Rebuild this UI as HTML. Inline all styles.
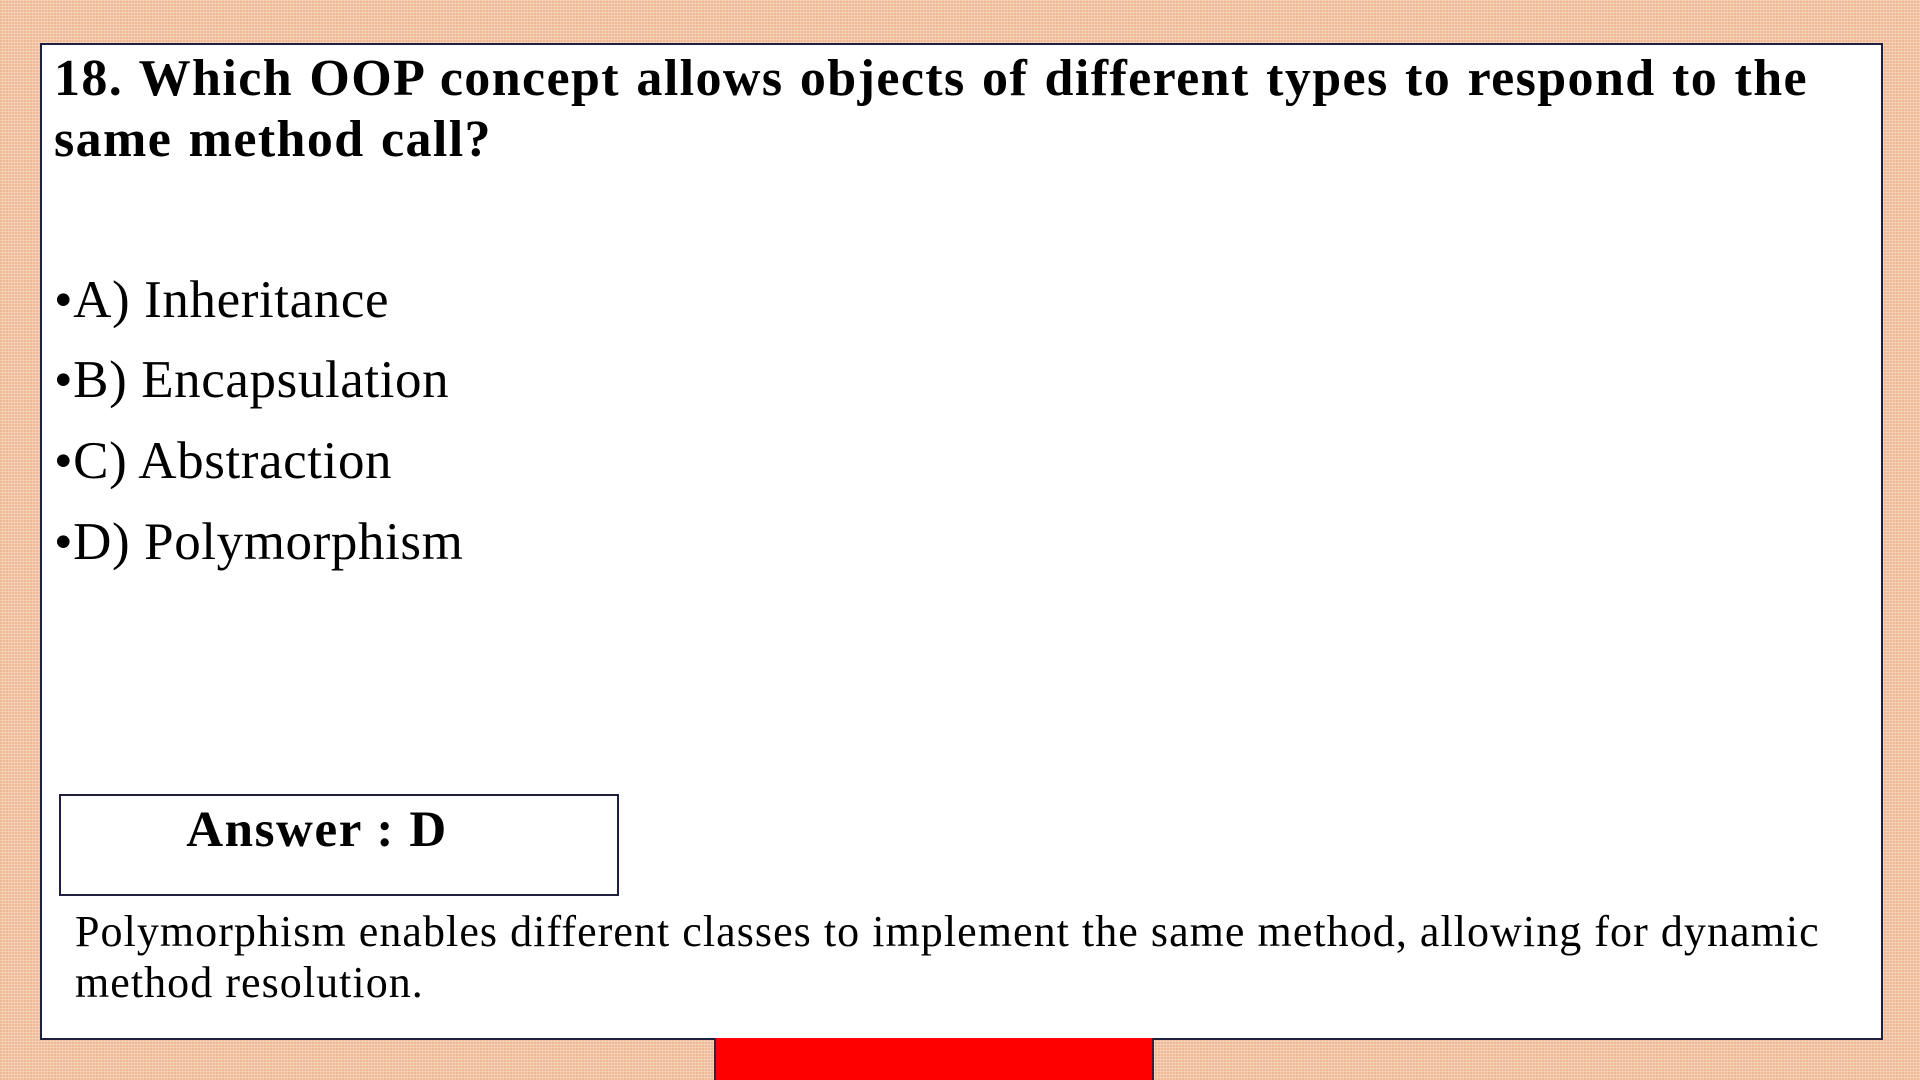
<!DOCTYPE html>
<html><head><meta charset="utf-8"><style>
html,body{margin:0;padding:0}
body{width:1920px;height:1080px;position:relative;overflow:hidden;
background-color:#eeb994;
background-image:
 repeating-linear-gradient(0deg, transparent 0 2px, rgba(255,240,225,.4) 2px 3px),
 repeating-linear-gradient(90deg, transparent 0 2px, rgba(255,240,225,.3) 2px 3px);
font-family:"Liberation Serif",serif;color:#000}
.box{position:absolute;left:40px;top:43px;width:1839px;height:993px;background:#fff;border:2px solid #1f2040}
.t{position:absolute;left:54px;top:48px;font-weight:bold;font-size:52px;letter-spacing:1.4px;word-spacing:2px;line-height:61px;white-space:nowrap}
.o{position:absolute;left:54px;font-size:53px;letter-spacing:0.6px;line-height:60px}
.ans{position:absolute;left:59px;top:794px;width:556px;height:98px;border:2px solid #1f2040;background:#fff}
.ans span{position:absolute;left:0;right:0;text-align:center;top:5px;font-weight:bold;font-size:51px;letter-spacing:1.6px;padding-right:44px}
.ex{position:absolute;left:75px;top:906px;font-size:44px;letter-spacing:1.05px;line-height:51px;white-space:nowrap}
.red{position:absolute;left:714px;top:1038px;width:436px;height:42px;background:#ff0000;border-left:2px solid #3a2030;border-right:2px solid #3a2030}
</style></head><body>
<div class="box"></div>
<div class="t">18. Which OOP concept allows objects of different types to respond to the<br>same method call?</div>
<div class="o" style="top:270px">•A) Inheritance</div>
<div class="o" style="top:350px">•B) Encapsulation</div>
<div class="o" style="top:431px">•C) Abstraction</div>
<div class="o" style="top:512px">•D) Polymorphism</div>
<div class="ans"><span>Answer : D</span></div>
<div class="ex">Polymorphism enables different classes to implement the same method, allowing for dynamic<br>method resolution.</div>
<div class="red"></div>
</body></html>
